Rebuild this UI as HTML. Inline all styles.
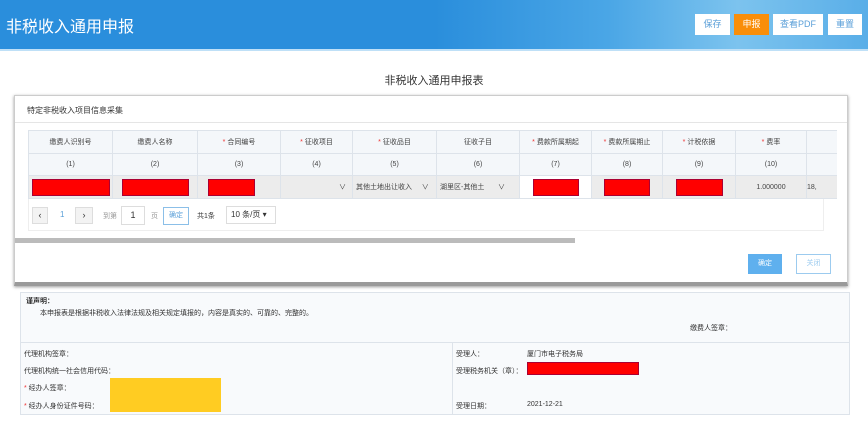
<!DOCTYPE html>
<html><head><meta charset="utf-8"><style>
*{margin:0;padding:0;box-sizing:border-box}
body{width:868px;height:443px;overflow:hidden;background:#fff;font-family:"Liberation Sans","Noto Sans CJK SC",sans-serif;color:#333;position:relative}
.abs{position:absolute}
.hdr{left:0;top:0;width:868px;height:51px;background:linear-gradient(90deg,#2a8edc 0%,#2a8edc 50%,#4aa6e6 70%,#7cc3ee 85%,#59aee8 100%);border-bottom:2px solid #bfe0f7}
.btn{top:14px;height:21px;background:#fff;color:#5a9fd8;font-size:9px;text-align:center;line-height:21px}
.t{font-size:8px;color:#333;white-space:nowrap}
.modal{left:14px;top:95px;width:834px;height:191px;background:#fff;border:1px solid #ccc;border-bottom:4px solid #9a9a9a;box-shadow:0 1px 3px #999}
table{border-collapse:collapse;position:absolute;left:28px;top:130px;font-size:7px}
td{border:1px solid #dde3ea;text-align:center;color:#444;padding:0}
.h td{height:23px;background:#f4f7fa}
.i td{height:22px;background:#f4f7fa}
.d td{height:23px;background:#ececec}
.r{display:inline-block;background:#f00;border:1px solid #a03;height:17px;vertical-align:middle}
.s{color:#e33}
.y{background:#ffcc22}
</style></head><body>
<div class="abs hdr"></div>
<div class="abs" style="left:6px;top:13px;color:#fff;font-size:16px">非税收入通用申报</div>
<div class="abs btn" style="left:695px;width:35px">保存</div>
<div class="abs btn" style="left:734px;width:35px;background:#f98e0a;color:#fff">申报</div>
<div class="abs btn" style="left:773px;width:50px">查看PDF</div>
<div class="abs btn" style="left:828px;width:34px">重置</div>
<div class="abs" style="left:0;top:72px;width:868px;text-align:center;font-size:11px">非税收入通用申报表</div>

<div class="abs modal"></div>
<div class="abs t" style="left:27px;top:105px">特定非税收入项目信息采集</div>
<div class="abs" style="left:15px;top:122px;width:832px;height:1px;background:#e5e5e5"></div>
<table>
<tr class="h"><td style="width:84px">缴费人识别号</td><td style="width:85px">缴费人名称</td><td style="width:83px"><span class="s">* </span>合同编号</td><td style="width:72px"><span class="s">* </span>征收项目</td><td style="width:84px"><span class="s">* </span>征收品目</td><td style="width:83px">征收子目</td><td style="width:72px"><span class="s">* </span>费款所属期起</td><td style="width:71px"><span class="s">* </span>费款所属期止</td><td style="width:73px"><span class="s">* </span>计税依据</td><td style="width:71px"><span class="s">* </span>费率</td><td style="width:30px;border-right:none"></td></tr>
<tr class="i"><td>(1)</td><td>(2)</td><td>(3)</td><td>(4)</td><td>(5)</td><td>(6)</td><td>(7)</td><td>(8)</td><td>(9)</td><td>(10)</td><td style="border-right:none"></td></tr>
<tr class="d"><td><span class="r" style="width:78px"></span></td><td><span class="r" style="width:67px"></span></td><td style="text-align:left;padding-left:10px"><span class="r" style="width:47px"></span></td><td style="text-align:right;padding-right:6px">∨</td><td style="text-align:left;padding-left:3px">其他土地出让收入 &nbsp;&nbsp;&nbsp; ∨</td><td style="text-align:left;padding-left:3px">湖里区-其他土 &nbsp;&nbsp;&nbsp;&nbsp;&nbsp; ∨</td><td style="background:#fff"><span class="r" style="width:46px"></span></td><td><span class="r" style="width:46px"></span></td><td><span class="r" style="width:47px"></span></td><td>1.000000</td><td style="border-right:none;text-align:left">18,</td></tr>
</table>
<div class="abs" style="left:28px;top:199px;width:796px;height:32px;border:1px solid #eee;border-top:none"></div>
<div class="abs" style="left:32px;top:207px;width:16px;height:17px;border:1px solid #ddd;background:#f3f3f3;font-size:9px;text-align:center;line-height:15px">‹</div>
<div class="abs t" style="left:60px;top:210px;color:#5a9fd8">1</div>
<div class="abs" style="left:75px;top:207px;width:18px;height:17px;border:1px solid #ddd;background:#f3f3f3;font-size:9px;text-align:center;line-height:15px">›</div>
<div class="abs t" style="left:103px;top:211px;color:#999;font-size:7px">到第</div>
<div class="abs" style="left:121px;top:206px;width:24px;height:19px;border:1px solid #ddd;font-size:9px;text-align:center;line-height:17px">1</div>
<div class="abs t" style="left:151px;top:211px;color:#999;font-size:7px">页</div>
<div class="abs" style="left:163px;top:207px;width:26px;height:18px;border:1px solid #8bbfe8;font-size:7px;color:#5a9fd8;text-align:center;line-height:16px">确定</div>
<div class="abs t" style="left:197px;top:211px;font-size:7px">共1条</div>
<div class="abs" style="left:226px;top:206px;width:50px;height:18px;border:1px solid #ddd;font-size:8px;line-height:16px;padding-left:4px">10 条/页 ▾</div>
<div class="abs" style="left:15px;top:238px;width:560px;height:5px;background:#bbb"></div>
<div class="abs" style="left:748px;top:254px;width:34px;height:20px;background:#5fb0ee;color:#fff;font-size:7px;text-align:center;line-height:20px">确定</div>
<div class="abs" style="left:796px;top:254px;width:35px;height:20px;border:1px solid #9ccbef;color:#9ccbef;font-size:7px;text-align:center;line-height:18px">关闭</div>

<div class="abs" style="left:20px;top:292px;width:830px;height:123px;border:1px solid #dde3ea;background:#f8fafc"></div>
<div class="abs" style="left:20px;top:342px;width:830px;height:1px;background:#dde3ea"></div>
<div class="abs" style="left:452px;top:343px;width:1px;height:71px;background:#dde3ea"></div>
<div class="abs t" style="left:26px;top:296px;font-weight:bold;font-size:7px">谨声明：</div>
<div class="abs t" style="left:40px;top:308px;font-size:7px">本申报表是根据非税收入法律法规及相关规定填报的，内容是真实的、可靠的、完整的。</div>
<div class="abs t" style="left:690px;top:323px;font-size:7px">缴费人签章：</div>
<div class="abs t" style="left:24px;top:349px;font-size:7px">代理机构签章：</div>
<div class="abs t" style="left:24px;top:366px;font-size:7px">代理机构统一社会信用代码：</div>
<div class="abs t" style="left:24px;top:383px;font-size:7px"><span class="s">* </span>经办人签章：</div>
<div class="abs t" style="left:24px;top:401px;font-size:7px"><span class="s">* </span>经办人身份证件号码：</div>
<div class="abs y" style="left:110px;top:378px;width:111px;height:34px"></div>
<div class="abs t" style="left:456px;top:349px;font-size:7px">受理人：</div>
<div class="abs t" style="left:527px;top:349px;font-size:7px">厦门市电子税务局</div>
<div class="abs t" style="left:456px;top:366px;font-size:7px">受理税务机关（章）：</div>
<div class="abs" style="left:527px;top:362px;width:112px;height:13px;background:#f00;border:1px solid #a03"></div>
<div class="abs t" style="left:456px;top:401px;font-size:7px">受理日期：</div>
<div class="abs t" style="left:527px;top:401px;font-size:7px">2021-12-21</div>
</body></html>
